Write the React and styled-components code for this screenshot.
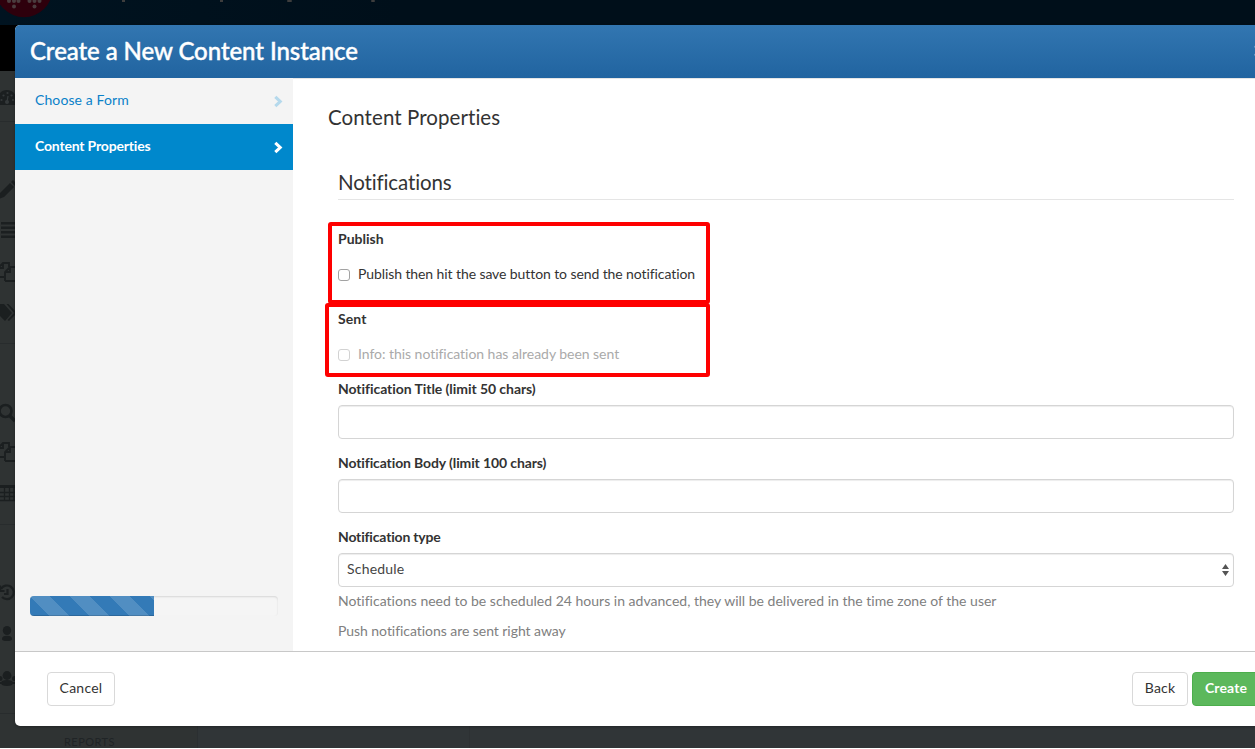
import React from 'react';
import styled, { createGlobalStyle, css } from 'styled-components';

const Global = createGlobalStyle`
  * { box-sizing: border-box; }
  body { margin: 0; overflow: hidden; background: #fff; font-family: Lato, "Liberation Sans", sans-serif; font-size: 14px; line-height: 20px; color: #333; font-variant-ligatures: none; }
`;

const Page = styled.div`
  position: relative;
  width: 1255px;
  height: 749px;
  overflow: hidden;
`;
const Backdrop = styled.div`
  height: 748px;
  display: flex;
  flex-direction: column;
  background: #303537;
`;
const TopBar = styled.div`
  height: 25px;
  flex: none;
  background: linear-gradient(90deg, #001320, #000f1a 400px);
`;
const Logo = styled.svg`
  display: block;
`;
const BackRow = styled.div`
  flex: 1;
  display: flex;
  align-items: stretch;
`;
const Rail = styled.div`
  width: 198px;
  display: flex;
  flex-direction: column;
  background: linear-gradient(#000 46px, #2f3333 46px);
  border-right: 1px solid #2b2f31;
`;
const RailIcons = styled.svg`
  display: block;
  flex: none;
`;
const RailLabel = styled.div`
  padding-left: 64px;
  margin-top: 7px;
  font-size: 11px;
  line-height: 16px;
  height: 14px;
  letter-spacing: 0.45px;
  color: #202426;
`;
const BackColumn = styled.div`
  width: 272px;
  border-right: 1px solid #2d3133;
`;

const Modal = styled.section`
  position: absolute;
  left: 15px;
  top: 25px;
  width: 1265px;
  height: 701px;
  display: flex;
  flex-direction: column;
  background: #fff;
  border-radius: 5px;
  overflow: hidden;
  box-shadow: 0 1px 3px rgba(0, 0, 0, 0.3);
`;
const Header = styled.header`
  height: 53px;
  flex: none;
  display: flex;
  align-items: center;
  justify-content: space-between;
  padding: 0 15px 2px;
  background: linear-gradient(#3276b1, #2164a0);
  color: #fff;
`;
const Title = styled.h3`
  margin: 0;
  font-size: 24px;
  line-height: 30px;
  font-weight: 500;
  letter-spacing: ${(p) => p.$ls || 0}px;
  -webkit-text-stroke: 0.4px #fff;
`;
const Close = styled.svg`
  width: 11px;
  height: 11px;
  color: #6d9fca;
`;
const Body = styled.div`
  flex: 1;
  min-height: 0;
  display: flex;
`;
const Steps = styled.nav`
  width: 278px;
  flex: none;
  display: flex;
  flex-direction: column;
  background: #f4f4f4;
`;
const Step = styled.div`
  height: 46px;
  flex: none;
  display: flex;
  align-items: center;
  justify-content: space-between;
  padding: 0 9px 2px 20px;
  color: #0a81c9;
  letter-spacing: ${(p) => p.$ls || 0}px;
  ${(p) => p.$active && css`
    background: #0088cc;
    color: #fff;
    font-weight: 700;
  `}
`;
const Chevron = styled.svg`
  width: 11px;
  height: 13px;
  margin-top: 3px;
  color: ${(p) => (p.$active ? '#fff' : '#b5d9ec')};
`;
const Progress = styled.div`
  margin: auto 15px 35px;
  height: 20px;
  flex: none;
  border-radius: 4px;
  background: #f5f5f5;
  box-shadow: inset 0 1px 2px rgba(0, 0, 0, 0.13);
  overflow: hidden;
`;
const Bar = styled.div`
  width: 50%;
  height: 100%;
  background: linear-gradient(45deg, rgba(255,255,255,.15) 25%, transparent 25%, transparent 50%, rgba(255,255,255,.15) 50%, rgba(255,255,255,.15) 75%, transparent 75%) 0 0 / 40px 40px #337ab7;
  box-shadow: inset 0 -1px 0 rgba(0, 0, 0, 0.15);
`;
const Content = styled.main`
  flex: 1;
  padding: 25px 0 0 35px;
  overflow: hidden;
  border-top: 1px solid #e5e5e5;
`;
const Heading = styled.h4`
  margin: 0;
  font-size: 20.5px;
  line-height: 26px;
  font-weight: 400;
  letter-spacing: ${(p) => p.$ls || 0}px;
`;
const Form = styled.div`
  width: 906px;
  padding: 39px 0 0 10px;
`;
const Legend = styled(Heading)`
  height: 31px;
  border-bottom: 1px solid #e5e5e5;
`;
const Callout = styled.div`
  width: ${(p) => p.$w}px;
  height: ${(p) => p.$h}px;
  margin: ${(p) => p.$m};
  padding: ${(p) => p.$p};
  border: 4px solid #fe0000;
  border-radius: 3px;
`;
const Label = styled.div`
  font-weight: 700;
  line-height: 20px;
  letter-spacing: ${(p) => p.$ls || 0}px;
`;
const Check = styled.label`
  display: flex;
  align-items: center;
  gap: 8px;
  height: 20px;
  margin-top: 15px;
  white-space: nowrap;
  letter-spacing: ${(p) => p.$ls || 0}px;
  color: ${(p) => (p.$disabled ? '#aaa' : '#333')};
`;
const Box = styled.span`
  width: 12px;
  height: 12px;
  margin-top: 1px;
  border: 1px solid ${(p) => (p.$disabled ? '#d2d2d2' : '#a2a2a2')};
  border-radius: 3px;
  background: #fff;
`;
const Field = styled.div`
  width: 896px;
  height: 34px;
  margin: 6px 0 ${(p) => (p.$tight ? 4 : 14)}px;
  padding: 0 4px 2px 8px;
  display: flex;
  align-items: center;
  justify-content: space-between;
  border: 1px solid #d5d5d5;
  border-radius: 4px;
  box-shadow: inset 0 1px 1px rgba(0, 0, 0, 0.075);
  color: #444;
  letter-spacing: ${(p) => p.$ls || 0}px;
`;
const Arrows = styled.svg`
  width: 7px;
  height: 14px;
  margin-top: 2px;
`;
const Help = styled.p`
  margin: 0 0 10px;
  color: #808080;
  white-space: nowrap;
  letter-spacing: ${(p) => p.$ls || 0}px;
`;
const Footer = styled.footer`
  height: 75px;
  flex: none;
  display: flex;
  justify-content: space-between;
  padding: 20px 20px 0 32px;
  border-top: 1px solid #c8c8c8;
`;
const Actions = styled.div`
  display: flex;
  gap: 4px;
`;
const Button = styled.button`
  height: 34px;
  width: ${(p) => p.$w}px;
  flex: none;
  padding: 0 0 2px;
  font: ${(p) => (p.$primary ? 700 : 400)} 14px/20px Lato, "Liberation Sans", sans-serif;
  letter-spacing: ${(p) => p.$ls || 0}px;
  color: ${(p) => (p.$primary ? '#fff' : '#333')};
  background: ${(p) => (p.$primary ? '#5cb85c' : '#fff')};
  border: 1px solid ${(p) => (p.$primary ? '#4cae4c' : '#d9d9d9')};
  border-radius: 4px;
`;

const ChevronIcon = ({ active }) => (
  <Chevron $active={active} viewBox="0 0 11 13">
    <path d="M2.3 1.8 L7.2 6.5 L2.3 11.2" fill="none" stroke="currentColor" strokeWidth="3.1" />
  </Chevron>
);

const LogoMarks = () => (
  <Logo width="400" height="25">
    <circle cx="24" cy="-11.4" r="28.6" fill="#2e000c" />
    <g fill="#4a3c3e">
      {[[9, 1], [14, 1], [18.5, 1], [29.5, 1], [34.5, 1], [39.5, 1], [14, 6.5], [34.5, 6.5]].map(([x, y]) => (
        <circle key={`${x}-${y}`} cx={x} cy={y} r="2" />
      ))}
    </g>
    <g fill="#3d3d3d">
      <rect x="122" y="0" width="3" height="2" />
      <rect x="220" y="0" width="3" height="2" />
      <rect x="287" y="0" width="5" height="2" rx="1" />
      <rect x="371" y="0" width="4" height="2" rx="1" />
    </g>
  </Logo>
);

const Docs = ({ y }) => (
  <g transform={`translate(0 ${y})`} fill="none" stroke="#1b1f20" strokeWidth="1.8">
    <path d="M-2 6 L3 1 H9 V5 M3 1 V6 H-2 M-2 15 H4 M5 19 V10 L10 5 H18 M10 5 V10 H5 M5 19 H18" />
  </g>
);

const Rails = () => (
  <RailIcons width="197" height="702" viewBox="0 25 197 702">
    <path d="M0 121.5H197M0 343.5H197M0 524.5H197M0 713.5H197" stroke="#282c2d" />
    <g fill="#1b1f20">
      <path d="M-1 105 C-4 96 0 90 7 90 C14 90 18 96 15 105 Z" />
      <path d="M0 193 L10 183 L14 187 L4 197 L-1 199 Z M11 182 L13 180 L17 184 L15 186 Z" />
      <path d="M1 222h14v2.4H1zM1 226.5h14v2.4H1zM1 231h14v2.4H1zM1 235.5h14v2.4H1z" />
      <path d="M-2 304 H4 L12 313 L5 321 L-2 314 Z M6.5 304 H8.5 L17 313 L9 321 L7.5 320 L14 313Z" />
      <path d="M0 485h15v3H0z" />
      <ellipse cx="7" cy="630.5" rx="4.2" ry="4.6" />
      <path d="M2 639 Q2 635.8 7 635.8 Q12 635.8 12 639 Q12 641 7 641 Q2 641 2 639Z" />
      <circle cx="7" cy="675.5" r="4.4" />
      <circle cx="0" cy="678.5" r="2.5" />
      <circle cx="14.5" cy="678.5" r="2.5" />
      <path d="M1 683 Q1 680 7 680 Q13 680 13 683 Q13 686 7 686 Q1 686 1 683Z M-2 682h5v2h-5zM12 682h5v2h-5z" />
    </g>
    <g fill="#34393a">
      <circle cx="1.5" cy="100" r="1.1" /><circle cx="3.5" cy="95.5" r="1.1" /><circle cx="7.5" cy="93" r="1.1" /><circle cx="11.5" cy="95.5" r="1.1" /><circle cx="13" cy="100" r="1.1" />
      <circle cx="7" cy="102" r="2" />
    </g>
    <path d="M7 102 L8 96" stroke="#34393a" strokeWidth="1.3" />
    <Docs y={262} />
    <Docs y={442} />
    <g fill="none" stroke="#1b1f20" strokeWidth="2.2">
      <circle cx="5.5" cy="411" r="6" strokeWidth="2.6" />
      <path d="M10 416 L15 421" strokeWidth="3.2" />
      <path d="M0 492.5H15M0 496.5H15M0 500.5H15M4.5 487V501M9.5 487V501M14 487V501" strokeWidth="1.3" />
      <path d="M1 589 A6.8 6.8 0 1 1 2 597 M7.5 589V594H4" />
      <path d="M0 585.5V591H4.5" />
    </g>
  </RailIcons>
);

export default function App() {
  return (
    <Page>
      <Global />
      <Backdrop>
        <TopBar><LogoMarks /></TopBar>
        <BackRow>
          <Rail>
            <Rails />
            <RailLabel>REPORTS</RailLabel>
          </Rail>
          <BackColumn />
        </BackRow>
      </Backdrop>
      <Modal>
        <Header>
          <Title $ls={-0.07}>Create a New Content Instance</Title>
          <Close viewBox="0 0 11 11"><path d="M0.5 1 L10 10.5 M10 1 L0.5 10.5" stroke="currentColor" strokeWidth="2" /></Close>
        </Header>
        <Body>
          <Steps>
            <Step $ls={0.1}>Choose a Form<ChevronIcon /></Step>
            <Step $active $ls={-0.18}>Content Properties<ChevronIcon active /></Step>
            <Progress><Bar /></Progress>
          </Steps>
          <Content>
            <Heading $ls={0.07}>Content Properties</Heading>
            <Form>
              <Legend $ls={-0.13}>Notifications</Legend>
              <Callout $w={382} $h={82} $m="22px 0 0 -10px" $p="3px 6px">
                <Label>Publish</Label>
                <Check $ls={-0.09}><Box />Publish then hit the save button to send the notification</Check>
              </Callout>
              <Callout $w={385} $h={74} $m="-1px 0 2px -13px" $p="2px 9px">
                <Label $ls={0.1}>Sent</Label>
                <Check $disabled $ls={-0.04}><Box $disabled />Info: this notification has already been sent</Check>
              </Callout>
              <Label $ls={-0.06}>Notification Title (limit 50 chars)</Label>
              <Field />
              <Label $ls={-0.12}>Notification Body (limit 100 chars)</Label>
              <Field />
              <Label $ls={-0.18}>Notification type</Label>
              <Field $tight $ls={0.2}>
                Schedule
                <Arrows viewBox="0 0 7 14"><path d="M3.5 1L7 6H0ZM3.5 13L0 8H7Z" fill="#555" /></Arrows>
              </Field>
              <Help $ls={0.01}>Notifications need to be scheduled 24 hours in advanced, they will be delivered in the time zone of the user</Help>
              <Help $ls={-0.05}>Push notifications are sent right away</Help>
            </Form>
          </Content>
        </Body>
        <Footer>
          <Button $w={68} $ls={0.25}>Cancel</Button>
          <Actions>
            <Button $w={56} $ls={0.2}>Back</Button>
            <Button $w={68} $primary $ls={0.1}>Create</Button>
          </Actions>
        </Footer>
      </Modal>
    </Page>
  );
}
